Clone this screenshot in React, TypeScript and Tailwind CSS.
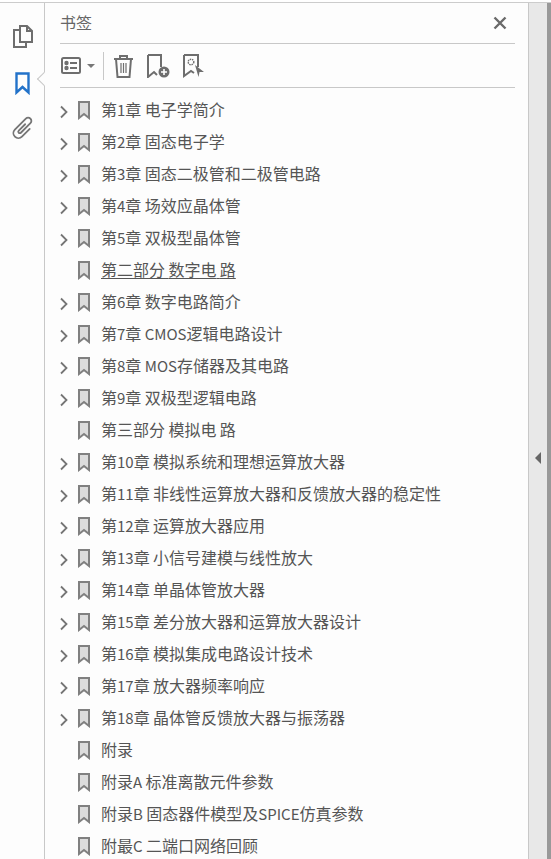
const chapters = [
  { title: "第1章 电子学简介", arrow: true },
  { title: "第2章 固态电子学", arrow: true },
  { title: "第3章 固态二极管和二极管电路", arrow: true },
  { title: "第4章 场效应晶体管", arrow: true },
  { title: "第5章 双极型晶体管", arrow: true },
  { title: "第二部分 数字电 路", arrow: false, underline: true },
  { title: "第6章 数字电路简介", arrow: true },
  { title: "第7章 CMOS逻辑电路设计", arrow: true },
  { title: "第8章 MOS存储器及其电路", arrow: true },
  { title: "第9章 双极型逻辑电路", arrow: true },
  { title: "第三部分 模拟电 路", arrow: false },
  { title: "第10章 模拟系统和理想运算放大器", arrow: true },
  { title: "第11章 非线性运算放大器和反馈放大器的稳定性", arrow: true },
  { title: "第12章 运算放大器应用", arrow: true },
  { title: "第13章 小信号建模与线性放大", arrow: true },
  { title: "第14章 单晶体管放大器", arrow: true },
  { title: "第15章 差分放大器和运算放大器设计", arrow: true },
  { title: "第16章 模拟集成电路设计技术", arrow: true },
  { title: "第17章 放大器频率响应", arrow: true },
  { title: "第18章 晶体管反馈放大器与振荡器", arrow: true },
  { title: "附录", arrow: false },
  { title: "附录A 标准离散元件参数", arrow: false },
  { title: "附录B 固态器件模型及SPICE仿真参数", arrow: false },
  { title: "附最C 二端口网络回顾", arrow: false },
];

// latin runs sit a bit narrower than the CJK text in the original
function Title({ text }: { text: string }) {
  return (
    <>
      {text.split(/([A-Za-z0-9 ]+)/).map((part, i) =>
        i % 2 === 1 ? (
          <span key={i} className="text-[15px]">
            {part}
          </span>
        ) : (
          part
        ),
      )}
    </>
  );
}

function BookmarkRow({ title, arrow, underline }: { title: string; arrow: boolean; underline?: boolean }) {
  return (
    <div className="flex h-8 shrink-0 items-center">
      <div className="mt-[3px] flex w-[9px]">
        {arrow && (
          <svg width="8" height="14" viewBox="0 0 8 14" fill="none" stroke="#757575" strokeWidth="1.800">
            <path d="M1 1.500 6.500 7 1 12.500" />
          </svg>
        )}
      </div>
      <svg className="ml-[9px] mt-[1px]" width="12" height="19" viewBox="0 0 12 19" fill="#dcdcdc" stroke="#808080" strokeWidth="2">
        <path d="M1 1h10v16l-5-4-5 4z" />
      </svg>
      <span className={"mb-[2px] ml-[11px] whitespace-nowrap text-[16px] leading-[30px] text-[#555555]" + (underline ? " underline underline-offset-2" : "")}>
        <Title text={title} />
      </span>
    </div>
  );
}

export default function App() {
  return (
    <div
      className="h-[859px] w-[551px] overflow-hidden bg-white pt-[2px]"
      style={{ fontFamily: '"Noto Sans CJK SC", "Noto Sans", sans-serif' }}
    >
      <div className="flex h-[857px] border-t border-[#cccccc] bg-[#fdfdfd]">
        <div className="relative flex w-[45px] shrink-0 flex-col items-center border-r border-[#c8c8c8] pl-[1px] pt-[22px]">
          <svg width="20" height="23" viewBox="0 0 20 23" fill="none" stroke="#6e6e6e" strokeWidth="2">
            <path d="M7 1h7l5 5v11H7z" />
            <path d="M14 1v5h5" />
            <path d="M7 5H1v17h12v-5" />
          </svg>
          <svg className="mt-[24px]" width="15" height="23" viewBox="0 0 15 23" fill="none" stroke="#2272c9" strokeWidth="2.400">
            <path d="M1.500 1.500h12v19l-6-5.500-6 5.500z" />
          </svg>
          <svg className="mt-[22px] overflow-visible" width="22" height="23" viewBox="0 0 22 23" fill="none" stroke="#757575" strokeWidth="1.800" strokeLinecap="round">
            <path transform="rotate(45 11 11.500)" d="M16 7v11a5 5 0 0 1-10 0V2.500a3.250 3.250 0 0 1 6.500 0V16a1.500 1.500 0 0 1-3 0V7" />
          </svg>
          <div className="absolute left-[39px] top-[71px] size-[10px] rotate-45 border-b border-l border-[#c8c8c8] bg-[#fdfdfd]" />
        </div>

        <div className="flex min-w-0 flex-1 flex-col pl-[15px] pr-[13px]">
          <div className="flex h-[41px] shrink-0 items-center justify-between border-b border-[#c8c8c8] pr-[8px]">
            <span className="mb-[2px] text-[16px] text-[#666666]">书签</span>
            <svg width="14" height="14" viewBox="0 0 14 14" stroke="#6a6a6a" strokeWidth="2.400">
              <path d="M1.500 1.500l11 11M12.500 1.500l-11 11" />
            </svg>
          </div>

          <div className="flex h-[44px] shrink-0 items-center border-b border-[#c8c8c8] pl-[1px]">
            <svg width="20" height="17" viewBox="0 0 20 17" fill="none" stroke="#6e6e6e" strokeWidth="2">
              <rect x="1" y="1" width="18" height="15" rx="1.500" />
              <path d="M9 6h7M9 11h7" />
              <circle cx="5.500" cy="6" r="1.200" fill="#6e6e6e" />
              <circle cx="5.500" cy="11" r="1.200" fill="#6e6e6e" />
            </svg>
            <div className="ml-[6px] size-0 border-x-[4px] border-t-[4px] border-x-transparent border-t-[#777777]" />
            <div className="ml-[8px] h-[28px] w-px bg-[#c8c8c8]" />
            <svg className="ml-[9px]" width="21" height="24" viewBox="0 0 21 24" fill="none" stroke="#6e6e6e" strokeWidth="2">
              <path d="M1 5h19M7 5V2h7v3M3 5l1.500 18h12L18 5" />
              <path d="M8 9v10M10.500 9v10M13 9v10" strokeWidth="1.200" />
            </svg>
            <svg className="ml-[13px]" width="23" height="24" viewBox="0 0 23 24" fill="none">
              <path d="M1 1h13v12M10 21l-3-3-6 5V1" stroke="#6e6e6e" strokeWidth="2" />
              <circle cx="17" cy="18" r="5.500" fill="#6e6e6e" />
              <path d="M14 18h6M17 15v6" stroke="#ffffff" strokeWidth="1.600" />
            </svg>
            <svg className="ml-[13px]" width="21" height="24" viewBox="0 0 21 24" fill="none">
              <path d="M1 1h14v12M1 1v21l7-5 3 2" stroke="#6e6e6e" strokeWidth="2" />
              <circle cx="8" cy="8" r="2.800" stroke="#6e6e6e" strokeWidth="1.400" strokeDasharray="1.500 0.800" />
              <path d="M12 11l9 7h-4.500l-1 5z" fill="#6e6e6e" />
            </svg>
          </div>

          <div className="flex min-h-0 flex-1 flex-col overflow-hidden pt-[6px]">
            {chapters.map((c) => (
              <BookmarkRow key={c.title} title={c.title} arrow={c.arrow} underline={c.underline} />
            ))}
          </div>
        </div>

        <div className="flex w-[19px] shrink-0 justify-center border-l border-[#c8c8c8] bg-[#e8e8e8] pt-[449px]">
          <div className="size-0 border-y-[6px] border-r-[6px] border-y-transparent border-r-[#666666]" />
        </div>
        <div className="w-[4px] shrink-0 bg-[#999999]" />
      </div>
    </div>
  );
}
